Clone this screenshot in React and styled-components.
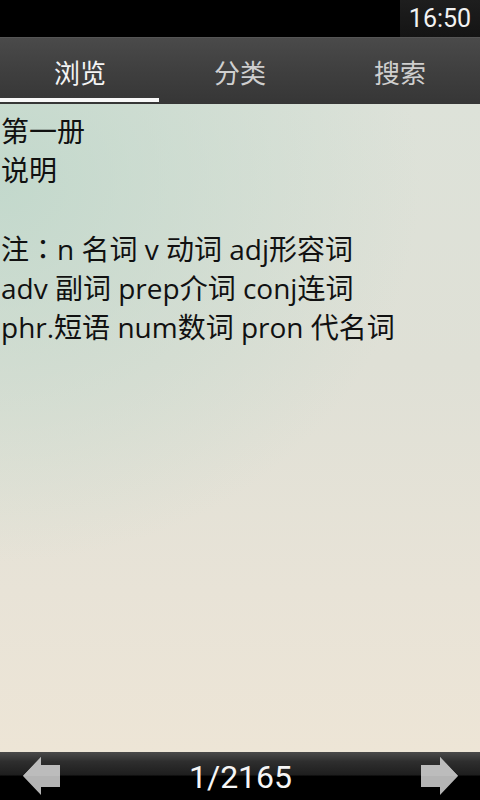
import React, { useState } from "react";
import styled, { createGlobalStyle } from "styled-components";

const GlobalStyle = createGlobalStyle`
  html, body {
    margin: 0;
    padding: 0;
    background: #000;
  }
  #root {
    width: 480px;
    height: 800px;
  }
`;

const tabs = ["浏览", "分类", "搜索"];

// the fullwidth colon is wrapped so it sits centred, as the phone font drew it
const lines = [
  ["第一册"],
  ["说明"],
  [""],
  ["注", "：", "n 名词 v 动词 adj形容词"],
  ["adv 副词 prep介词 conj连词"],
  ["phr.短语 num数词 pron 代名词"],
];

const ArrowIcon = ({ dir }) => (
  <svg width="38" height="40" viewBox="0 0 38 40">
    <g transform={dir === "right" ? "translate(38 0) scale(-1 1)" : undefined}>
      <polygon
        points="0,20 18,1 18,9 37,9 37,31 18,31 18,39"
        fill="#b4b4b4"
      />
      <polygon points="18,9 37,9 37,20 0,20 18,1" fill="#bcbcbc" />
    </g>
  </svg>
);

const App = () => {
  const [active, setActive] = useState(0);
  const page = 1;
  const total = 2165;

  return (
    <>
      <GlobalStyle />
      <Screen>
        <StatusBar>
          <Clock>16:50</Clock>
        </StatusBar>
        <TabBar>
          {tabs.map((t, i) => (
            <Tab key={t} active={i === active} onClick={() => setActive(i)}>
              {t}
              {i === active && <Indicator />}
            </Tab>
          ))}
        </TabBar>
        <Content>
          {lines.map((parts, i) => (
            <Line key={`line-${i}`}>
              {parts.length === 3 ? (
                <>
                  {parts[0]}
                  <Punct>{parts[1]}</Punct>
                  {parts[2]}
                </>
              ) : (
                parts[0] || "\u00a0"
              )}
            </Line>
          ))}
        </Content>
        <BottomBar>
          <NavButton>
            <ArrowIcon dir="left" />
          </NavButton>
          <PageNum>
            {page}/{total}
          </PageNum>
          <NavButton>
            <ArrowIcon dir="right" />
          </NavButton>
        </BottomBar>
      </Screen>
    </>
  );
};

export default App;

const Screen = styled.div`
  width: 480px;
  height: 800px;
  display: flex;
  flex-direction: column;
  overflow: hidden;
  font-family: Roboto, "Noto Sans CJK SC", sans-serif;
`;

const StatusBar = styled.div`
  height: 37px;
  background: #000;
  display: flex;
  justify-content: flex-end;
`;

const Clock = styled.div`
  width: 80px;
  background: linear-gradient(180deg, #1e1e1e 0%, #141414 100%);
  color: #f2f2f2;
  font-family: Roboto, sans-serif;
  font-size: 25px;
  line-height: 37px;
  text-align: center;
`;

const TabBar = styled.div`
  height: 67px;
  display: flex;
  background: linear-gradient(180deg, #4a4a4a 0%, #404040 45%, #363636 100%);
  border-top: 1px solid #555;
  box-sizing: border-box;
`;

const Tab = styled.div`
  position: relative;
  flex: 1;
  display: flex;
  align-items: center;
  justify-content: center;
  font-family: "Noto Sans CJK SC", sans-serif;
  font-size: 26px;
  color: ${(p) => (p.active ? "#f4f4f4" : "#cfcfcf")};
  cursor: pointer;
`;

const Indicator = styled.div`
  position: absolute;
  left: 0;
  right: 1px;
  bottom: 2px;
  height: 4px;
  background: #f8f8f8;
`;

const Content = styled.div`
  flex: 1;
  padding: 8px 0 0 1px;
  background:
    radial-gradient(ellipse 420px 380px at 0% 12%, rgba(190, 215, 202, 0.85) 0%, rgba(190, 215, 202, 0) 100%),
    linear-gradient(180deg, #dde2d9 0%, #dfe0d6 40%, #e8e3d7 75%, #ede5d6 100%);
`;

const Line = styled.div`
  font-family: "Open Sans", "Noto Sans CJK SC", sans-serif;
  font-size: 28px;
  line-height: 39px;
  color: #111;
  white-space: nowrap;
`;

const Punct = styled.span`
  font-family: "Noto Sans CJK TC", sans-serif;
`;

const BottomBar = styled.div`
  height: 48px;
  display: flex;
  align-items: center;
  justify-content: space-between;
  padding: 0 22px 0 23px;
  background: linear-gradient(
    180deg,
    #4a4a4a 0%,
    #2e2e2e 20%,
    #1e1e1e 48%,
    #000 50%,
    #000 100%
  );
`;

const NavButton = styled.div`
  display: flex;
  align-items: center;
  cursor: pointer;
`;

const PageNum = styled.div`
  font-family: Roboto, sans-serif;
  font-size: 32px;
  color: #f6f6f6;
  padding-top: 2px;
`;
